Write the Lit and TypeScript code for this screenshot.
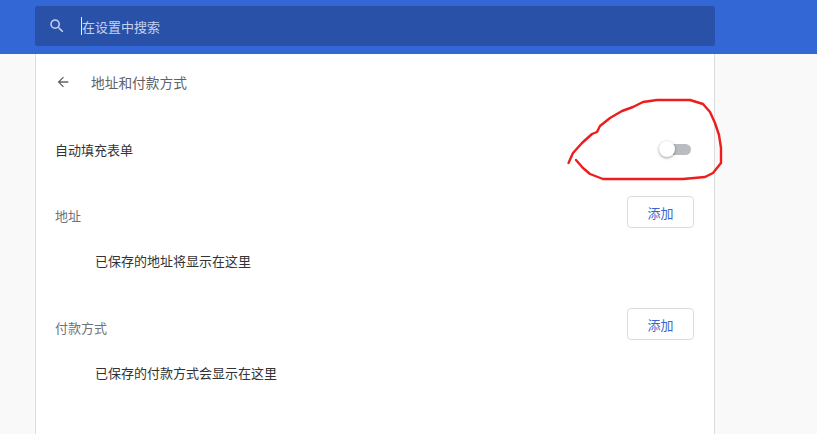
import { LitElement, html, css, svg } from "lit";
import { customElement } from "lit/decorators.js";

const SCRIBBLE =
  "M568.5 163 L573 153 L582 143 L592 134 L597 132 L600 126 L610 118 L622 111 L633 107 L643 102 L657 100 L690 100 L703 104 L710 112 L715 123 L719 135 L721 148 L721 163 L713 173 L705 177 L683 179 L603 179 L590 174 L583 168 L576 160";

@customElement("app-root")
export class AppRoot extends LitElement {
  static styles = css`
    :host {
      display: block;
      position: relative;
      height: 434px;
      overflow: hidden;
      background: #f9f9f9;
      font-family: "Noto Sans CJK SC", "Liberation Sans", sans-serif;
      font-size: 13px;
      color: #333;
    }
    .header {
      height: 54px;
      box-sizing: border-box;
      padding: 6px 0 0 35px;
      background: #3367d6;
    }
    .search {
      width: 680px;
      height: 40px;
      display: flex;
      align-items: center;
      background: #2a51a8;
      border-radius: 2px;
      color: #c3d2f0;
    }
    .search svg {
      width: 18px;
      height: 18px;
      margin-left: 13px;
      fill: #c3d2f0;
    }
    .caret {
      width: 1px;
      height: 18px;
      margin-left: 15px;
      background: #e4ebfa;
    }
    .card {
      width: 680px;
      height: 380px;
      margin-left: 35px;
      box-sizing: border-box;
      background: #fff;
      border-left: 1px solid #dcdcdc;
      border-right: 1px solid #dcdcdc;
      padding: 0 20px 0 19px;
    }
    .title {
      height: 56px;
      display: flex;
      align-items: center;
      font-size: 13.7px;
      color: #5f6368;
    }
    .title svg {
      width: 16px;
      height: 16px;
      margin-right: 20px;
      fill: #5f6368;
    }
    .toggle-row {
      height: 78px;
      display: flex;
      align-items: center;
      justify-content: space-between;
    }
    .toggle {
      position: relative;
      width: 29px;
      height: 11px;
      margin-right: 3px;
      border-radius: 6px;
      background: #b9bdc2;
    }
    .knob {
      position: absolute;
      left: -3px;
      top: -2.5px;
      width: 16px;
      height: 16px;
      border-radius: 50%;
      background: #fff;
      box-shadow: 0 1px 3px rgba(0, 0, 0, 0.4);
    }
    .section {
      height: 112px;
    }
    .section-head {
      height: 48px;
      display: flex;
      align-items: center;
      justify-content: space-between;
      color: #6f7378;
    }
    .section-head span {
      padding-top: 6px;
    }
    button {
      width: 67px;
      height: 32px;
      padding: 0;
      font: inherit;
      color: #3a68c8;
      background: #fff;
      border: 1px solid #dadce0;
      border-radius: 4px;
    }
    .empty {
      height: 50px;
      padding-left: 40px;
      line-height: 50px;
    }
    .scribble {
      position: absolute;
      inset: 0;
      width: 817px;
      height: 434px;
      pointer-events: none;
    }
    .scribble path {
      fill: none;
      stroke: #ee1c1c;
      stroke-width: 2.4;
      stroke-linecap: round;
      stroke-linejoin: round;
    }
  `;

  renderSection(name: string, empty: string) {
    return html`
      <div class="section">
        <div class="section-head">
          <span>${name}</span>
          <button>添加</button>
        </div>
        <div class="empty">${empty}</div>
      </div>
    `;
  }

  render() {
    return html`
      <div class="header">
        <div class="search">
          <svg viewBox="0 0 24 24">
            <path
              d="M15.5 14h-.79l-.28-.27A6.47 6.47 0 0 0 16 9.5 6.5 6.5 0 1 0 9.5 16c1.61 0 3.09-.59 4.23-1.57l.27.28v.79l5 4.99L20.49 19l-4.99-5zm-6 0C7.01 14 5 11.99 5 9.5S7.01 5 9.5 5 14 7.01 14 9.5 11.99 14 9.5 14z"
            />
          </svg>
          <div class="caret"></div>
          <span>在设置中搜索</span>
        </div>
      </div>
      <div class="card">
        <div class="title">
          <svg viewBox="0 0 24 24">
            <path d="M20 11H7.83l5.59-5.59L12 4l-8 8 8 8 1.41-1.41L7.83 13H20v-2z" />
          </svg>
          <span>地址和付款方式</span>
        </div>
        <div class="toggle-row">
          <span>自动填充表单</span>
          <div class="toggle"><div class="knob"></div></div>
        </div>
        ${this.renderSection("地址", "已保存的地址将显示在这里")}
        ${this.renderSection("付款方式", "已保存的付款方式会显示在这里")}
      </div>
      <svg class="scribble" viewBox="0 0 817 434">${svg`<path d=${SCRIBBLE} />`}</svg>
    `;
  }
}
